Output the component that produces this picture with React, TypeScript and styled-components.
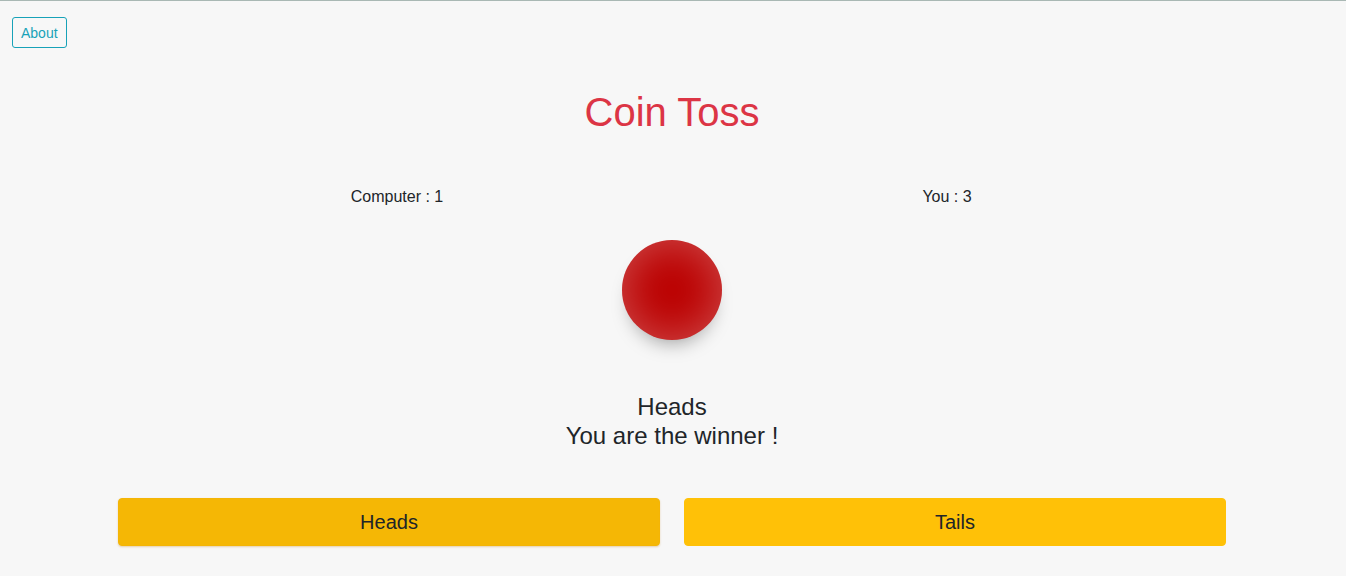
import React, { useState } from "react";
import styled, { createGlobalStyle } from "styled-components";

const GlobalStyle = createGlobalStyle`
  *, *::before, *::after { box-sizing: border-box; }
  body {
    margin: 0;
    background: #f7f7f7;
    color: #212529;
    font-family: "Liberation Sans", Arial, sans-serif;
    font-size: 16px;
    line-height: 24px;
  }
`;

const Page = styled.div`
  border-top: 1px solid #a9b8b4;
  padding: 16px 2px 0 0;
`;

const TopBar = styled.header`
  display: flex;
  padding: 0 12px;
`;

const AboutButton = styled.button`
  padding: 5px 8px 3px;
  border: 1px solid #17a2b8;
  border-radius: 3px;
  background: transparent;
  color: #17a2b8;
  font: inherit;
  font-size: 14px;
  line-height: 21px;
  cursor: pointer;
`;

const Content = styled.main`
  width: 100%;
  max-width: 1140px;
  margin: 0 auto;
  padding: 40px 16px 30px;
  text-align: center;
`;

const Title = styled.h1`
  margin: 0 0 49px;
  color: #dc3545;
  font-size: 40px;
  font-weight: 400;
  line-height: 48px;
`;

const Scores = styled.div`
  display: grid;
  grid-template-columns: 1fr 1fr;
  padding: 0 4px;
`;

const Score = styled.p`
  margin: 0;
`;

const Coin = styled.div`
  width: 100px;
  height: 100px;
  margin: 31px auto 52px;
  border-radius: 50%;
  background: #bb0000;
  box-shadow:
    inset 0 0 45px rgba(255, 255, 255, 0.3),
    0 12px 20px -10px rgba(0, 0, 0, 0.4);
`;

const Result = styled.h2`
  margin: 0 0 48px;
  font-size: 24px;
  font-weight: 400;
  line-height: 29px;
`;

const Choices = styled.div`
  display: grid;
  grid-template-columns: 1fr 1fr;
  column-gap: 24px;
`;

const ChoiceButton = styled.button<{ $chosen: boolean }>`
  padding: 8px 16px;
  border: 1px solid ${(p) => (p.$chosen ? "#f4b506" : "#ffc107")};
  border-radius: 4px;
  background: ${(p) => (p.$chosen ? "#f5b705" : "#ffc107")};
  box-shadow: ${(p) => (p.$chosen ? "0 1px 2px rgba(190, 120, 0, 0.3)" : "none")};
  color: #212529;
  font: inherit;
  font-size: 20px;
  line-height: 30px;
  cursor: pointer;
`;

export default function App() {
  const [chosen, setChosen] = useState("Heads");
  return (
    <>
      <GlobalStyle />
      <Page>
        <TopBar>
          <AboutButton type="button">About</AboutButton>
        </TopBar>
        <Content>
          <Title>Coin Toss</Title>
          <Scores>
            <Score>Computer : 1</Score>
            <Score>You : 3</Score>
          </Scores>
          <Coin />
          <Result>
            Heads
            <br />
            You are the winner !
          </Result>
          <Choices>
            {["Heads", "Tails"].map((side) => (
              <ChoiceButton
                key={side}
                type="button"
                $chosen={side === chosen}
                onClick={() => setChosen(side)}
              >
                {side}
              </ChoiceButton>
            ))}
          </Choices>
        </Content>
      </Page>
    </>
  );
}
